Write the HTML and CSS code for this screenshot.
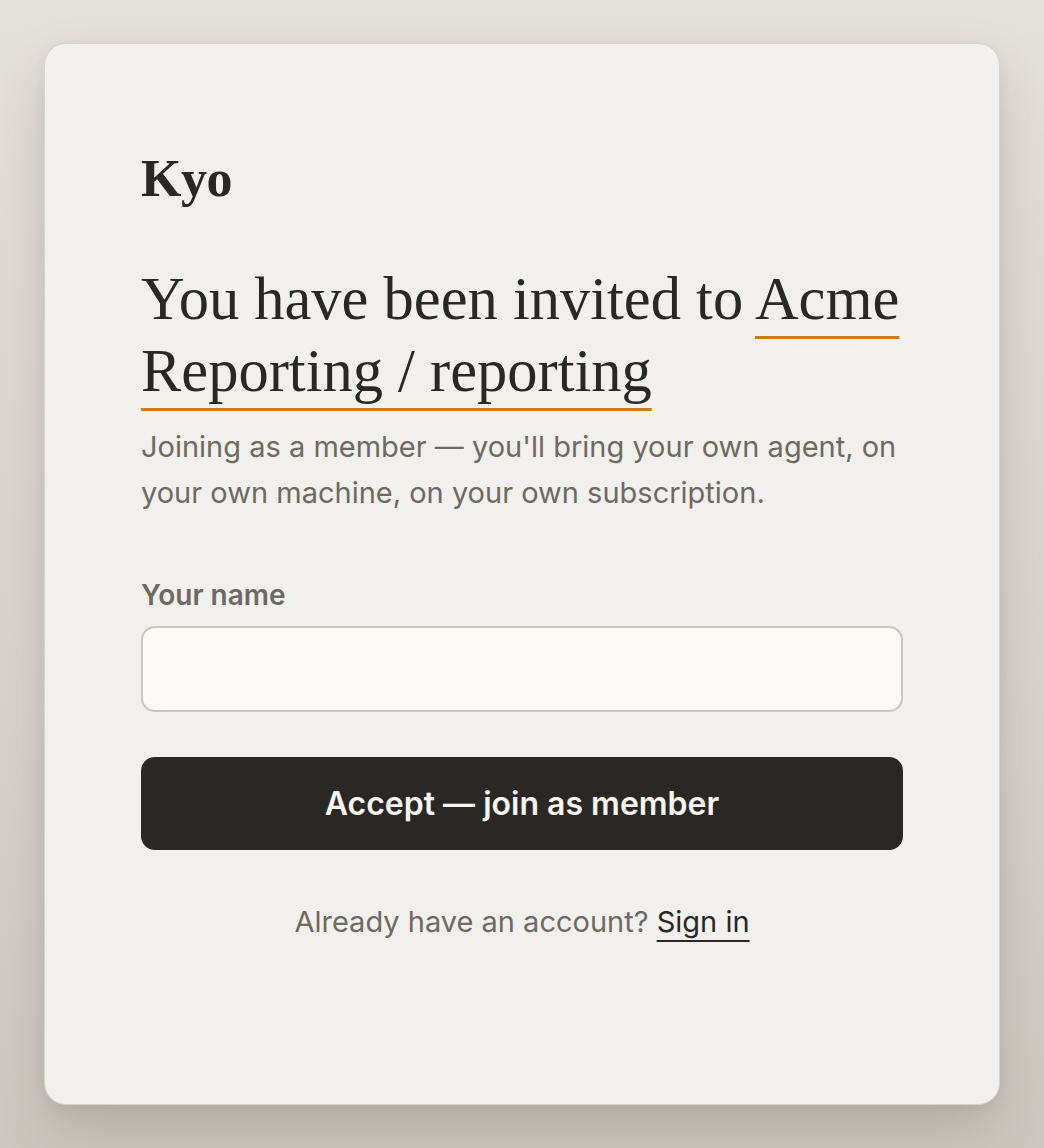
FILE: index.html
```html
<!DOCTYPE html>
<html lang="en">
<head>
<meta charset="utf-8">
<title>Kyo — Invitation</title>
<link rel="stylesheet" href="styles.css">
</head>
<body>
<main class="card">
  <div class="brand">Kyo</div>
  <h1 class="title">You have been invited to <span class="org">Acme Reporting / reporting</span></h1>
  <p class="lead">Joining as a member — you'll bring your own agent, on your own machine, on your own subscription.</p>
  <form class="form">
    <label class="label" for="name">Your name</label>
    <input class="input" id="name" type="text">
    <button class="btn" type="button">Accept — join as member</button>
  </form>
  <p class="foot">Already have an account? <a class="link" href="#">Sign in</a></p>
</main>
</body>
</html>
```
FILE: styles.css
```css
* { box-sizing: border-box; }
html, body { margin: 0; padding: 0; }
body {
  min-height: 100vh;
  display: flex;
  align-items: center;
  justify-content: center;
  background: linear-gradient(180deg, #e4e0da 0%, #d9d4ce 60%, #cdc8c1 100%);
  font-family: Inter, "Liberation Sans", sans-serif;
}
.card {
  width: 956px;
  height: 1062px;
  background: #f1f0ed;
  border: 1px solid #d6d2cc;
  border-radius: 22px;
  box-shadow: 0 30px 60px rgba(70, 60, 50, 0.18), 0 4px 12px rgba(70, 60, 50, 0.08);
  padding: 105px 96px 0 96px;
}
.brand {
  font-family: "Liberation Serif", serif;
  font-weight: 700;
  font-size: 52px;
  line-height: 60px;
  color: #2b2724;
  letter-spacing: -0.5px;
}
.title {
  margin: 54px 0 0 0;
  font-family: "Liberation Serif", serif;
  font-weight: 400;
  font-size: 60.5px;
  line-height: 72px;
  color: #2b2724;
}
.org {
  text-decoration: underline;
  text-decoration-color: #c97d1e;
  text-decoration-thickness: 3px;
  text-underline-offset: 17px;
}
.lead {
  margin: 17px 0 0 0;
  font-size: 29px;
  line-height: 46px;
  color: #6e6961;
}
.form {
  display: flex;
  flex-direction: column;
  margin-top: 64px;
}
.label {
  font-size: 28px;
  font-weight: 600;
  color: #6e6961;
  line-height: 30px;
}
.input {
  margin-top: 16px;
  height: 86px;
  border: 2px solid #cbc6bf;
  border-radius: 14px;
  background: #fbfaf7;
  font: inherit;
  font-size: 28px;
  padding: 0 20px;
}
.btn {
  margin-top: 45px;
  height: 93px;
  border: 0;
  border-radius: 14px;
  background: #2b2724;
  color: #f7f5f1;
  font-family: Inter, "Liberation Sans", sans-serif;
  font-size: 32px;
  font-weight: 600;
}
.foot {
  margin: 52px 0 0 0;
  text-align: center;
  font-size: 29px;
  line-height: 40px;
  color: #6e6961;
}
.link {
  color: #2b2724;
  text-decoration: underline;
  text-decoration-thickness: 2px;
  text-underline-offset: 8px;
}
```
